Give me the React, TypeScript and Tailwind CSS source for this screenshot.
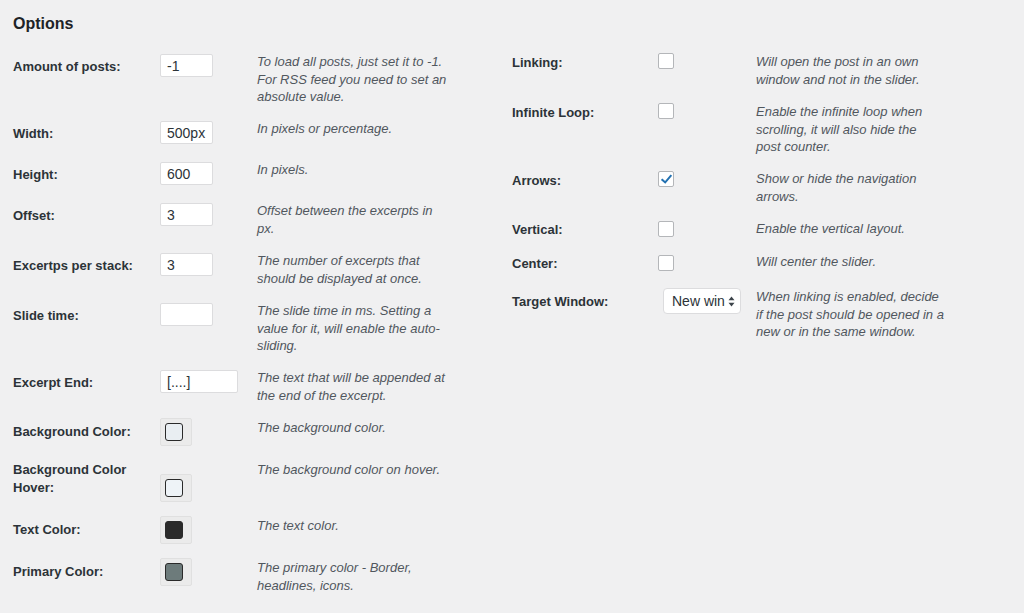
import React from "react";

const L = ({ children, mt = "mt-[5px]", lh = "leading-[17.5px]" }: { children: React.ReactNode; mt?: string; lh?: string }) => (
  <div className={`w-[147px] shrink-0 pt-[1px] text-[13px] ${lh} font-bold text-[#2c3338] ${mt}`}>{children}</div>
);

const D = ({ children }: { children: React.ReactNode }) => (
  <div className="whitespace-nowrap pt-[1px] text-[13px] leading-[17.5px] italic text-[#50575e]">{children}</div>
);

const Input = ({ value, w = "w-[53px]" }: { value: string; w?: string }) => (
  <div className="w-[97px] shrink-0">
    <div className={`mt-[2px] h-[23px] ${w} bg-white border border-[#dcdcde] rounded-[2px] pl-[6px] text-[14px] leading-[22px] text-[#2c3338]`}>
      {value}
    </div>
  </div>
);

const Swatch = ({ color, mt = "mt-0" }: { color: string; mt?: string }) => (
  <div className="w-[97px] shrink-0">
    <div className={`${mt} w-[32px] h-[28px] bg-[#ebebeb] border border-[#e0e0e0] rounded-[2px] flex items-center pl-[4px]`}>
      <div className={`w-[18px] h-[18px] rounded-[3px] border-[1.5px] border-[#2a2a2a] ${color}`} />
    </div>
  </div>
);

const Check = ({ checked = false, mt = "mt-[1px]" }: { checked?: boolean; mt?: string }) => (
  <div className="w-[98px] shrink-0">
    <div className={`${mt} w-[16px] h-[16px] bg-white border border-[#b4b6b9] rounded-[2px] flex items-center justify-center`}>
      {checked && (
        <svg width="13" height="13" viewBox="0 0 20 20">
          <path d="M3.5 10.5 L8 14.5 L16.5 4.5" fill="none" stroke="#2271b1" strokeWidth="3" strokeLinecap="square" />
        </svg>
      )}
    </div>
  </div>
);

const RL = ({ children, mt = "mt-[1px]" }: { children: React.ReactNode; mt?: string }) => (
  <div className={`w-[146px] shrink-0 pt-[1px] text-[13px] leading-[17.5px] font-bold text-[#2c3338] ${mt}`}>{children}</div>
);

export default function App() {
  return (
    <div className="w-[1024px] h-[613px] bg-[#f0f0f1] overflow-hidden pl-[13px] pt-[13px]" style={{ fontFamily: '"Liberation Sans", Arial, sans-serif' }}>
      <h2 className="pt-[1px] h-[20px] text-[16px] leading-[20px] font-bold text-[#1d2327]">Options</h2>
      <div className="flex mt-[19px]">
        {/* Left column */}
        <div className="w-[499px] shrink-0 flex flex-col">
          <div className="flex items-start h-[67px]">
            <L>Amount of posts:</L>
            <Input value="-1" />
            <D>To load all posts, just set it to -1.<br />For RSS feed you need to set an<br />absolute value.</D>
          </div>
          <div className="flex items-start h-[41px]">
            <L>Width:</L>
            <Input value="500px" />
            <D>In pixels or percentage.</D>
          </div>
          <div className="flex items-start h-[41px]">
            <L>Height:</L>
            <Input value="600" />
            <D>In pixels.</D>
          </div>
          <div className="flex items-start h-[50px]">
            <L>Offset:</L>
            <Input value="3" />
            <D>Offset between the excerpts in<br />px.</D>
          </div>
          <div className="flex items-start h-[50px]">
            <L>Excertps per stack:</L>
            <Input value="3" />
            <D>The number of excerpts that<br />should be displayed at once.</D>
          </div>
          <div className="flex items-start h-[67px]">
            <L>Slide time:</L>
            <Input value="" />
            <D>The slide time in ms. Setting a<br />value for it, will enable the auto-<br />sliding.</D>
          </div>
          <div className="flex items-start h-[50px]">
            <L>Excerpt End:</L>
            <Input value="[....]" w="w-[78px]" />
            <D>The text that will be appended at<br />the end of the excerpt.</D>
          </div>
          <div className="flex items-start h-[42px]">
            <L mt="mt-[4px]">Background Color:</L>
            <Swatch color="bg-[#e9eef2]" />
            <D>The background color.</D>
          </div>
          <div className="flex items-start h-[56px]">
            <L mt="mt-0" lh="leading-[18px]">Background Color<br />Hover:</L>
            <Swatch color="bg-[#eef3f7]" mt="mt-[14px]" />
            <D>The background color on hover.</D>
          </div>
          <div className="flex items-start h-[42px]">
            <L mt="mt-[4px]">Text Color:</L>
            <Swatch color="bg-[#2a2a2a]" />
            <D>The text color.</D>
          </div>
          <div className="flex items-start">
            <L mt="mt-[4px]">Primary Color:</L>
            <Swatch color="bg-[#6d7b7b]" />
            <D>The primary color - Border,<br />headlines, icons.</D>
          </div>
        </div>
        {/* Right column */}
        <div className="flex flex-col">
          <div className="flex items-start h-[50px]">
            <RL>Linking:</RL>
            <Check />
            <D>Will open the post in an own<br />window and not in the slider.</D>
          </div>
          <div className="flex items-start h-[67px]">
            <RL>Infinite Loop:</RL>
            <Check />
            <D>Enable the infinite loop when<br />scrolling, it will also hide the<br />post counter.</D>
          </div>
          <div className="flex items-start h-[50px]">
            <RL mt="mt-[2px]">Arrows:</RL>
            <Check checked mt="mt-[2px]" />
            <D>Show or hide the navigation<br />arrows.</D>
          </div>
          <div className="flex items-start h-[33px]">
            <RL>Vertical:</RL>
            <Check mt="mt-[2px]" />
            <D>Enable the vertical layout.</D>
          </div>
          <div className="flex items-start h-[35px]">
            <RL mt="mt-[2px]">Center:</RL>
            <Check mt="mt-[3px]" />
            <D>Will center the slider.</D>
          </div>
          <div className="flex items-start">
            <RL mt="mt-[5px]">Target Window:</RL>
            <div className="w-[98px] shrink-0">
              <div className="ml-[5px] mt-[1px] w-[78px] h-[26px] bg-white border border-[#dcdcde] rounded-[4px] flex items-center pl-[8px] pr-[5px] text-[14px] text-[#2c3338]">
                <span className="flex-1 whitespace-nowrap overflow-hidden">New win</span>
                <svg width="7" height="11" viewBox="0 0 7 11">
                  <path d="M3.5 0.5 L6.5 4.2 L0.5 4.2 Z" fill="#3c434a" />
                  <path d="M3.5 10.5 L6.5 6.8 L0.5 6.8 Z" fill="#3c434a" />
                </svg>
              </div>
            </div>
            <D>When linking is enabled, decide<br />if the post should be opened in a<br />new or in the same window.</D>
          </div>
        </div>
      </div>
    </div>
  );
}
